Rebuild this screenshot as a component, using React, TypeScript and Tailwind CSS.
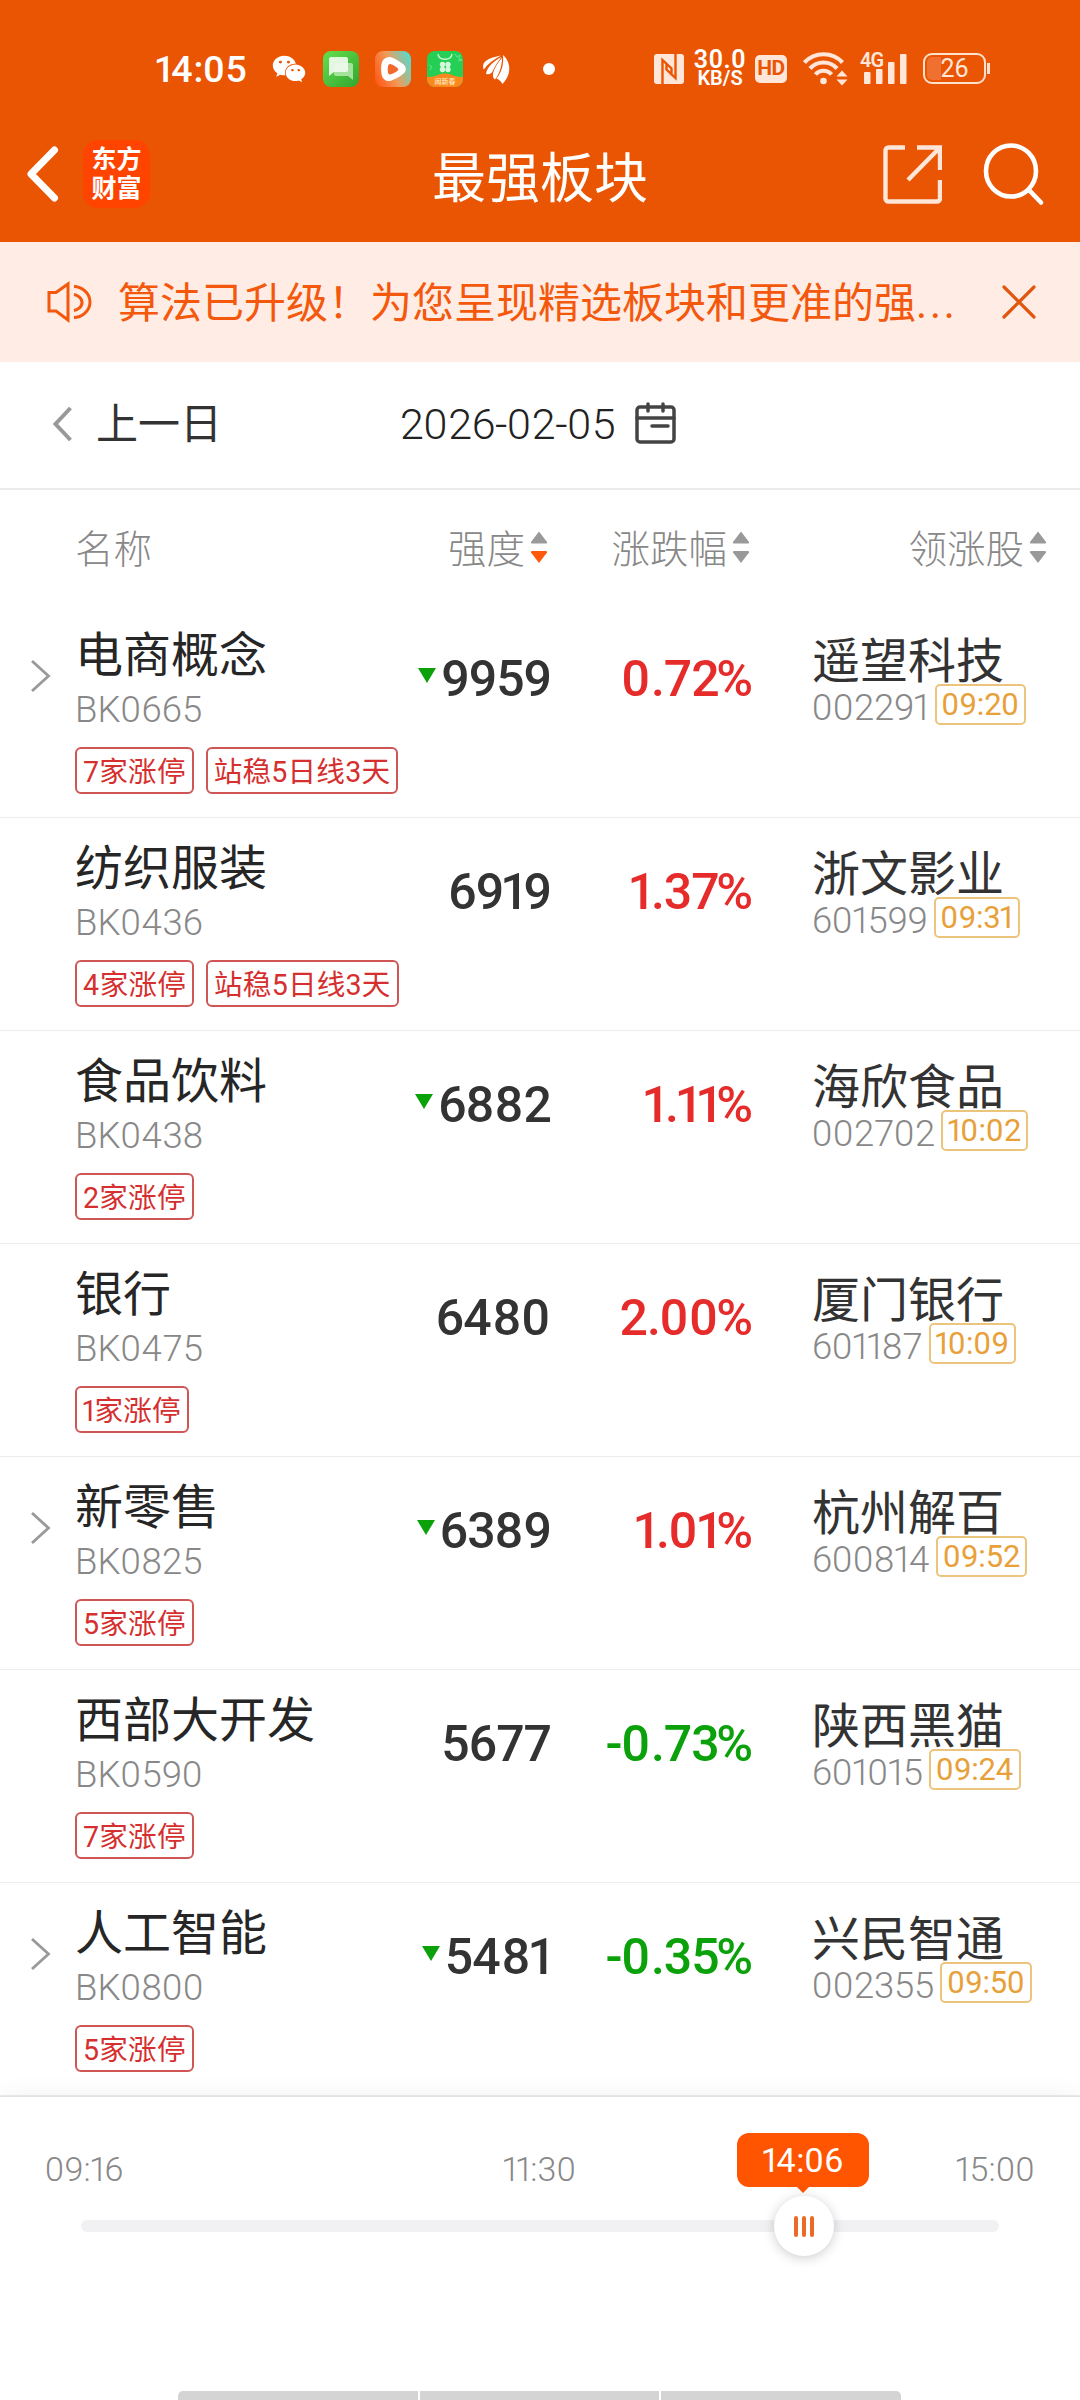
import { Fragment } from 'react'
import { FaWeixin } from 'react-icons/fa'

interface Sector {
  name: string
  code: string
  tags: string[]
  strength: string
  falling?: boolean
  expandable?: boolean
  change: string
  stock: string
  stockCode: string
  time: string
}

const sectors: Sector[] = [
  { name: '电商概念', code: 'BK0665', tags: ['7家涨停', '站稳5日线3天'], strength: '9959', falling: true, expandable: true, change: '0.72%', stock: '遥望科技', stockCode: '002291', time: '09:20' },
  { name: '纺织服装', code: 'BK0436', tags: ['4家涨停', '站稳5日线3天'], strength: '6919', change: '1.37%', stock: '浙文影业', stockCode: '601599', time: '09:31' },
  { name: '食品饮料', code: 'BK0438', tags: ['2家涨停'], strength: '6882', falling: true, change: '1.11%', stock: '海欣食品', stockCode: '002702', time: '10:02' },
  { name: '银行', code: 'BK0475', tags: ['1家涨停'], strength: '6480', change: '2.00%', stock: '厦门银行', stockCode: '601187', time: '10:09' },
  { name: '新零售', code: 'BK0825', tags: ['5家涨停'], strength: '6389', falling: true, expandable: true, change: '1.01%', stock: '杭州解百', stockCode: '600814', time: '09:52' },
  { name: '西部大开发', code: 'BK0590', tags: ['7家涨停'], strength: '5677', change: '-0.73%', stock: '陕西黑猫', stockCode: '601015', time: '09:24' },
  { name: '人工智能', code: 'BK0800', tags: ['5家涨停'], strength: '5481', falling: true, expandable: true, change: '-0.35%', stock: '兴民智通', stockCode: '002355', time: '09:50' },
]

// Roboto digits are tabular, so narrow and wide ones are adjusted by hand
const spacing: Record<string, string> = {
  '1': '-ml-[0.06em] tracking-[-0.1em]',
  '0': 'tracking-[0.02em]',
  '4': 'tracking-[0.02em]',
  '8': 'tracking-[0.01em]',
  '%': '-ml-[0.05em]',
}

function Num({ children }: { children: string }) {
  return (
    <>
      {children.split('').map((c, i) =>
        spacing[c] ? (
          <span key={i} className={spacing[c]}>{c}</span>
        ) : (
          <Fragment key={i}>{c}</Fragment>
        )
      )}
    </>
  )
}

function StatusBar() {
  return (
    <div className="flex h-[106px] items-center pt-[31px] pl-[156px] text-white">
      <div className="w-[116px] text-[37.500px] leading-[40px] font-medium">
        <Num>14:05</Num>
      </div>
      <FaWeixin className="h-[34px] w-[34px]" />
      <svg className="ml-[17px]" width="36" height="36" viewBox="0 0 36 36">
        <defs>
          <linearGradient id="msg" x1="0" y1="0" x2="1" y2="1">
            <stop offset="0" stopColor="#66e04c" />
            <stop offset="1" stopColor="#31a52f" />
          </linearGradient>
        </defs>
        <rect width="36" height="36" rx="8" fill="url(#msg)" />
        <path d="M13 12h15a2 2 0 0 1 2 2v15l-5-4H13a2 2 0 0 1-2-2v-9a2 2 0 0 1 2-2z" fill="#a5e39c" />
        <path d="M8 6h15a2 2 0 0 1 2 2v11a2 2 0 0 1-2 2H11l-5 4V8a2 2 0 0 1 2-2z" fill="#f0fbee" fillOpacity="0.92" />
      </svg>
      <svg className="ml-[16px]" width="36" height="36" viewBox="0 0 36 36">
        <defs>
          <linearGradient id="player" x1="0" y1="0.75" x2="1" y2="0.35">
            <stop offset="0" stopColor="#ff5a1c" />
            <stop offset="0.5" stopColor="#f29a58" />
            <stop offset="1" stopColor="#62d6c4" />
          </linearGradient>
        </defs>
        <rect width="36" height="36" rx="8" fill="url(#player)" />
        <path d="M14 6c3-.6 14 6 16 9 1 2 1 4 0 6-2 3-11 8-15 9-4 .5-7-2-8-5-1.200-4-1.200-10 0-14 1-3 4-4.500 7-5z" fill="#fff" />
        <path d="M15 13c1-.4 7 3 8 4.500.4.600.4 1.200 0 1.800-1 1.400-6 4-8 4.200-1 0-1.600-.6-1.900-1.500-.5-2-.5-5 0-7.200.3-1 .9-1.600 1.900-1.800z" fill="#f2692e" />
      </svg>
      <svg className="ml-[16px]" width="36" height="36" viewBox="0 0 36 36">
        <defs>
          <clipPath id="shop"><rect width="36" height="36" rx="8" /></clipPath>
        </defs>
        <g clipPath="url(#shop)">
          <rect width="36" height="36" fill="#25cf55" />
          <path d="M11 3c1 7 13 7 14 0" fill="none" stroke="#c9f7d2" strokeWidth="1.500" />
          <path d="M28 3l2 3 3-2-1 4 3 1-4 1M2 14l3 2-2 3" fill="none" stroke="#7be89a" strokeWidth="0.800" />
          <g fill="#d5f8dc">
            <circle cx="15.500" cy="13.500" r="2.700" />
            <circle cx="21" cy="13.500" r="2.700" />
            <circle cx="15.500" cy="18.500" r="2.700" />
            <circle cx="21" cy="18.500" r="2.700" />
          </g>
          <path d="M0 26c6 0 8-1 11-2 4-2 10-2 14 0 3 1 6 2 11 2v10H0z" fill="#fb8a1e" />
          <text x="18" y="33" textAnchor="middle" fontSize="7" fontWeight="500" fill="#ffe9c4" fontFamily="Noto Sans CJK SC">闹新春</text>
        </g>
      </svg>
      <svg className="ml-[20px]" width="28" height="32" viewBox="0 0 28 32" fill="#fff">
        <path d="M18 2.500C9 4 2 7 .5 11c-.8 2-.5 4 .3 5.500C5 10.500 11 6.500 18 2.500z" />
        <path d="M18.500 4C11 8 4 13.500 3 21c4 1.200 6-1 7.500-4.500C12.500 12 15.500 8 18.500 4z" />
        <path d="M19 5c-4 4-8 11-9 15.500-.3 3 .3 5 2 6C16 22 19 13 19 5z" />
        <path d="M20 2c.8 9-1 17-6.500 23.500 2 1 4.500 2.500 6 5.500C25 25 27 19 26 12.500 25 8 23 4.500 20 2z" />
      </svg>
      <div className="ml-[32px] h-[12px] w-[12px] rounded-full bg-white" />
      <svg className="ml-[99px]" width="30" height="30" viewBox="0 0 30 30">
        <rect width="30" height="30" rx="3" fill="#ffe6d9" />
        <path d="M8.500 30V6l9 8.500v7M21.500 0v24l-9-8.500v-6" fill="none" stroke="#ea5504" strokeWidth="2.400" />
      </svg>
      <div className="ml-[9px] flex w-[54px] flex-col items-center font-semibold">
        <span className="text-[25px] leading-[19px] tracking-[0.6px]">30.0</span>
        <span className="text-[20px] leading-[18px]">KB/S</span>
      </div>
      <div className="ml-[8px] flex h-[28px] w-[32px] items-center justify-center rounded-[5px] bg-[#ffe6d9] text-[21px] leading-none font-bold tracking-[-0.5px] text-[#ea5504]">
        HD
      </div>
      <svg className="ml-[16px]" width="46" height="36" viewBox="0 0 46 36">
        <g fill="none" stroke="#ffe6d9" strokeWidth="4.200">
          <path d="M1.500 11.500c10-11 28-11 38 0" />
          <path d="M7 17.500c7-8 20-8 27 0" />
          <path d="M12.500 23.500c4-5 12-5 16 0" />
        </g>
        <circle cx="20.500" cy="30" r="3.300" fill="#ffe6d9" />
        <path d="M33.500 25.500l5.500-6 5.500 6zM33.500 28.500l5.500 6 5.500-6z" fill="#ffe6d9" />
      </svg>
      <div className="relative ml-[12px] h-[32px] w-[47px] text-[#ffe6d9]">
        <span className="absolute -top-[2px] -left-[1px] text-[20px] leading-[18px] font-semibold tracking-[-1px]">4G</span>
        <svg width="47" height="32" viewBox="0 0 47 32" fill="currentColor">
          <rect x="3" y="19" width="6.500" height="12" rx="1" />
          <rect x="15" y="16" width="6.500" height="15" rx="1" />
          <rect x="27" y="9" width="6.500" height="22" rx="1" />
          <rect x="39" y="1" width="6.500" height="30" rx="1" />
        </svg>
      </div>
      <div className="ml-[15px] flex h-[31px] w-[63px] items-center justify-center rounded-[9px] border-[2.500px] border-[#ffe0cc] bg-[linear-gradient(90deg,#f0712f_16px,transparent_16px)] bg-clip-content p-[2px] text-[25px] leading-none text-[#ffe6d9]">
        26
      </div>
      <div className="ml-[1px] h-[11px] w-[3px] bg-[#ffe0cc]" />
    </div>
  )
}

function NavBar() {
  return (
    <div className="flex h-[136px] items-center pl-[26px]">
      <svg width="34" height="58" viewBox="0 0 34 58" fill="none" stroke="#fff" strokeWidth="7" strokeLinecap="round" strokeLinejoin="round">
        <path d="M28.500 5L5 29l23.500 24" />
      </svg>
      <div className="ml-[23px] flex h-[68px] w-[67px] flex-col items-center justify-center rounded-[15px] bg-[#ff4400] text-[25px] leading-[29px] font-bold text-white">
        <span>东方</span>
        <span>财富</span>
      </div>
      <h1 className="ml-[282px] w-[450px] pt-[11px] text-[54px] leading-[60px] text-white">最强板块</h1>
      <svg width="60" height="60" viewBox="0 0 60 60" fill="none" stroke="#ffe6d9" strokeWidth="4.400">
        <path d="M23 3.500H6.500a3 3 0 0 0-3 3v48a3 3 0 0 0 3 3H55a3 3 0 0 0 3-3V36" />
        <path d="M35 3.500h23V26M58 3.500L26 36" />
      </svg>
      <svg className="ml-[41px]" width="64" height="64" viewBox="0 0 64 64" fill="none" stroke="#fff" strokeWidth="4.600" strokeLinecap="round">
        <ellipse cx="28" cy="29" rx="25" ry="25.500" />
        <path d="M46 48l12 12.500" />
      </svg>
    </div>
  )
}

function Notice() {
  return (
    <div className="flex h-[120px] items-center bg-[#ffede5] pl-[46px] text-[#f4580c]">
      <svg width="48" height="42" viewBox="0 0 48 42" fill="none" stroke="currentColor" strokeWidth="3">
        <path d="M3 11.500h7L22 3v36l-12-9H3z" />
        <path d="M28 13.500c3 .5 8 3 8 8s-5 7.500-8 8M28 5.500c7 0 16 6 16 15.500S35 36.500 28 36.500" />
      </svg>
      <p className="ml-[24px] w-[870px] pt-[4px] text-[42px] leading-[60px] whitespace-nowrap">
        算法已升级！为您呈现精选板块和更准的强<span className="tracking-[2.800px]">...</span>
      </p>
      <svg className="ml-[12px]" width="38" height="38" viewBox="0 0 38 38" fill="none" stroke="#e0560f" strokeWidth="3.200" strokeLinecap="round">
        <path d="M4 4l30 30M34 4L4 34" />
      </svg>
    </div>
  )
}

function DateBar() {
  return (
    <div className="flex h-[128px] items-center border-b-2 border-[#ebebeb] pb-[3px] pl-[52px] text-[#333]">
      <svg width="22" height="36" viewBox="0 0 22 36" fill="none" stroke="#999" strokeWidth="4">
        <path d="M18.500 2L3.500 18l15 16" />
      </svg>
      <span className="ml-[22px] w-[304px] pt-[2px] text-[42px] leading-[60px]">上一日</span>
      <span className="w-[234px] text-[43px] leading-[60px] font-light tracking-[-0.4px] text-[#222]"><Num>2026-02-05</Num></span>
      <svg className="-mt-[2px]" width="42" height="42" viewBox="0 0 42 42" fill="none" stroke="#444" strokeWidth="3.500" strokeLinecap="round">
        <rect x="3" y="5" width="37" height="35" rx="3" />
        <path d="M3 16h37M14 2v7M29 2v7M18 24h16" />
      </svg>
    </div>
  )
}

function SortLabel({ label, active }: { label: string; active?: boolean }) {
  return (
    <div className="flex items-center justify-end gap-[5px]">
      <span className="pt-[4px]">{label}</span>
      <svg width="18" height="34" viewBox="0 0 18 34">
        <path d="M9 0.500L1 11q-.5 1.500 1 1.500h14q1.500 0 1-1.500z" fill="#999" />
        <path d="M9 32L1 21.500q-.5-1.500 1-1.500h14q1.500 0 1 1.500z" fill={active ? '#ff5a0c' : '#999'} />
      </svg>
    </div>
  )
}

function SectorRow({ item }: { item: Sector }) {
  return (
    <div className="flex h-[213px] border-b border-[#ececec]">
      <div className="w-[75px] pt-[54px] pl-[30px]">
        {item.expandable && (
          <svg width="21" height="34" viewBox="0 0 21 34" fill="none" stroke="#999" strokeWidth="2.800">
            <path d="M2 2l16.500 15L2 32" />
          </svg>
        )}
      </div>
      <div className="w-[335px] pt-[23px]">
        <div className="text-[48px] leading-[56px] text-[#262626]">{item.name}</div>
        <div className="mt-[6px] text-[36.500px] leading-[40px] font-light text-[#888]">
          <Num>{item.code}</Num>
        </div>
        <div className="mt-[17px] flex gap-[12px]">
          {item.tags.map((tag) => (
            <span key={tag} className="flex h-[47px] items-center rounded-[6px] border-2 border-[#d05656] px-[6px] pt-[2px] text-[28.600px] leading-[40px] tracking-[0.2px] whitespace-nowrap text-[#d62f2f]">
              <span><Num>{tag}</Num></span>
            </span>
          ))}
        </div>
      </div>
      <div className="flex w-[141px] items-start justify-end gap-[5px] pt-[44px]">
        {item.falling && (
          <svg className="mt-[19px]" width="18" height="15" viewBox="0 0 18 15">
            <path d="M0 0h18L9 15z" fill="#0aa10a" />
          </svg>
        )}
        <span className="text-[50px] leading-[60px] font-medium tracking-[-1px] text-[#333]"><Num>{item.strength}</Num></span>
      </div>
      <div className={`w-[201px] pt-[44px] text-right text-[50px] leading-[60px] font-medium tracking-[-1px] ${item.change.startsWith('-') ? 'text-[#0aa10a]' : 'text-[#e62b2b]'}`}>
        <Num>{item.change}</Num>
      </div>
      <div className="pt-[29px] pl-[60px]">
        <div className="text-[48px] leading-[56px] text-[#333]">{item.stock}</div>
        <div className="-mt-[6px] flex items-start gap-[6px]">
          <span className="mt-[1px] text-[36.500px] leading-[46px] font-light tracking-[-0.2px] text-[#888]"><Num>{item.stockCode}</Num></span>
          <span className="flex h-[41px] items-center rounded-[5px] border-2 border-[#ecc47c] px-[5px] pt-[1px] text-[31px] leading-[36px] tracking-[-0.2px] text-[#e8a13a]"><span><Num>{item.time}</Num></span></span>
        </div>
      </div>
    </div>
  )
}

function Timeline() {
  return (
    <div className="relative h-[304px] border-t border-[#e2e2e2] bg-white shadow-[0_0_24px_rgba(0,0,0,0.06)]">
      <div className="flex justify-between px-[45px] pt-[50px] text-[34px] leading-[44px] font-light tracking-[0.2px] text-[#888]">
        <span><Num>09:16</Num></span>
        <span><Num>11:30</Num></span>
        <span><Num>15:00</Num></span>
      </div>
      <div className="mx-[81px] mt-[29px] h-[12px] rounded-full bg-[#f1f1f3]" />
      <div className="absolute top-[36px] left-[737px] flex h-[54px] w-[132px] items-center justify-center rounded-[12px] bg-[#ff5500] text-[34px] leading-[44px] text-white">
        <span><Num>14:06</Num></span>
        <svg className="absolute top-[53px] left-[59px]" width="14" height="7" viewBox="0 0 14 7">
          <path d="M0 0h14L7 7z" fill="#ff5500" />
        </svg>
      </div>
      <div className="absolute top-[99px] left-[774px] flex h-[60px] w-[60px] items-center justify-center gap-[4px] rounded-full bg-white shadow-[0_2px_12px_rgba(0,0,0,0.2)]">
        <span className="h-[21px] w-[4px] rounded-full bg-[#ec6a27]" />
        <span className="h-[21px] w-[4px] rounded-full bg-[#ec6a27]" />
        <span className="h-[21px] w-[4px] rounded-full bg-[#ec6a27]" />
      </div>
      <div className="absolute bottom-0 left-[178px] flex h-[9px] w-[723px] gap-[2px] overflow-hidden rounded-t-[5px]">
        <span className="flex-1 bg-[#d4d4d4]" />
        <span className="flex-1 bg-[#d4d4d4]" />
        <span className="flex-1 bg-[#d4d4d4]" />
      </div>
    </div>
  )
}

export default function App() {
  return (
    <div className="h-[2400px] w-[1080px] overflow-hidden bg-white font-[Roboto,'Noto_Sans_CJK_SC',sans-serif]">
      <header className="h-[242px] bg-[#ea5504]">
        <StatusBar />
        <NavBar />
      </header>
      <Notice />
      <DateBar />
      <div className="flex h-[115px] items-center text-[38.500px] leading-[50px] font-light text-[#888]">
        <span className="w-[350px] pt-[4px] pl-[75px]">名称</span>
        <div className="w-[198px]"><SortLabel label="强度" active /></div>
        <div className="w-[202px]"><SortLabel label="涨跌幅" /></div>
        <div className="w-[297px]"><SortLabel label="领涨股" /></div>
      </div>
      {sectors.map((item) => (
        <SectorRow key={item.code} item={item} />
      ))}
      <Timeline />
    </div>
  )
}
